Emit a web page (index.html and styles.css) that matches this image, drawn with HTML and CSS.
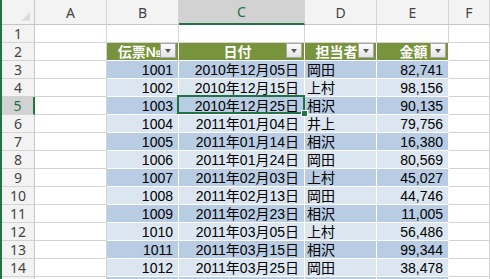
FILE: index.html
```html
<!DOCTYPE html>
<html lang="ja">
<head>
    <meta charset="UTF-8">
    <title>売上表</title>
    <link rel="stylesheet" href="styles.css">
</head>
<body>
<div class="sheet">
    <div class="row head">
        <div class="corner">
            <svg width="33" height="24" viewBox="0 0 33 24"><polygon points="29,12 29,21 20,21" fill="#dadada"/></svg>
        </div>
        <div class="colhead">A</div>
        <div class="colhead">B</div>
        <div class="colhead active">C</div>
        <div class="colhead">D</div>
        <div class="colhead">E</div>
        <div class="colhead">F</div>
    </div>

    <div class="row">
        <div class="rowhead">1</div>
        <div class="cell"></div><div class="cell"></div><div class="cell"></div>
        <div class="cell"></div><div class="cell"></div><div class="cell"></div>
    </div>

    <div class="row">
        <div class="rowhead">2</div>
        <div class="cell"></div>
        <div class="cell th th-b">伝票№<span class="filter"></span></div>
        <div class="cell th th-c">日付<span class="filter"></span></div>
        <div class="cell th th-d">担当者<span class="filter"></span></div>
        <div class="cell th th-e">金額<span class="filter"></span></div>
        <div class="cell"></div>
    </div>

    <div class="row">
        <div class="rowhead">3</div><div class="cell"></div>
        <div class="cell band num">1001</div><div class="cell band num">2010年12月05日</div>
        <div class="cell band">岡田</div><div class="cell band num">82,741</div><div class="cell"></div>
    </div>
    <div class="row">
        <div class="rowhead">4</div><div class="cell"></div>
        <div class="cell light num">1002</div><div class="cell light num">2010年12月15日</div>
        <div class="cell light">上村</div><div class="cell light num">98,156</div><div class="cell"></div>
    </div>
    <div class="row">
        <div class="rowhead active">5</div><div class="cell"></div>
        <div class="cell band num">1003</div><div class="cell band num sel">2010年12月25日</div>
        <div class="cell band">相沢</div><div class="cell band num">90,135</div><div class="cell"></div>
    </div>
    <div class="row">
        <div class="rowhead">6</div><div class="cell"></div>
        <div class="cell light num">1004</div><div class="cell light num">2011年01月04日</div>
        <div class="cell light">井上</div><div class="cell light num">79,756</div><div class="cell"></div>
    </div>
    <div class="row">
        <div class="rowhead">7</div><div class="cell"></div>
        <div class="cell band num">1005</div><div class="cell band num">2011年01月14日</div>
        <div class="cell band">相沢</div><div class="cell band num">16,380</div><div class="cell"></div>
    </div>
    <div class="row">
        <div class="rowhead">8</div><div class="cell"></div>
        <div class="cell light num">1006</div><div class="cell light num">2011年01月24日</div>
        <div class="cell light">岡田</div><div class="cell light num">80,569</div><div class="cell"></div>
    </div>
    <div class="row">
        <div class="rowhead">9</div><div class="cell"></div>
        <div class="cell band num">1007</div><div class="cell band num">2011年02月03日</div>
        <div class="cell band">上村</div><div class="cell band num">45,027</div><div class="cell"></div>
    </div>
    <div class="row">
        <div class="rowhead">10</div><div class="cell"></div>
        <div class="cell light num">1008</div><div class="cell light num">2011年02月13日</div>
        <div class="cell light">岡田</div><div class="cell light num">44,746</div><div class="cell"></div>
    </div>
    <div class="row">
        <div class="rowhead">11</div><div class="cell"></div>
        <div class="cell band num">1009</div><div class="cell band num">2011年02月23日</div>
        <div class="cell band">相沢</div><div class="cell band num">11,005</div><div class="cell"></div>
    </div>
    <div class="row">
        <div class="rowhead">12</div><div class="cell"></div>
        <div class="cell light num">1010</div><div class="cell light num">2011年03月05日</div>
        <div class="cell light">上村</div><div class="cell light num">56,486</div><div class="cell"></div>
    </div>
    <div class="row">
        <div class="rowhead">13</div><div class="cell"></div>
        <div class="cell band num">1011</div><div class="cell band num">2011年03月15日</div>
        <div class="cell band">相沢</div><div class="cell band num">99,344</div><div class="cell"></div>
    </div>
    <div class="row">
        <div class="rowhead">14</div><div class="cell"></div>
        <div class="cell light num">1012</div><div class="cell light num">2011年03月25日</div>
        <div class="cell light">岡田</div><div class="cell light num">38,478</div><div class="cell"></div>
    </div>
    <div class="row">
        <div class="rowhead"></div><div class="cell"></div>
        <div class="cell band"></div><div class="cell band"></div>
        <div class="cell band"></div><div class="cell band"></div><div class="cell"></div>
    </div>
</div>
</body>
</html>
```

FILE: styles.css
```css
:root {
    --excel-green: #217346;
    --table-head: #77933c;
    --band-dark: #b8cce4;
    --band-light: #dce6f1;
    --grid: #d4d4d4;
    --head-bg: #f3f3f3;
}

body {
    margin: 0;
    background: #fff;
    overflow: hidden;
    font-family: "Liberation Sans", "Noto Sans CJK JP", sans-serif;
}

.sheet {
    border-left: 2px solid var(--excel-green);
    height: 279px;
    overflow: hidden;
}

.row {
    display: grid;
    grid-template-columns: 33px 72px 72px 126px 72px 72px 1fr;
    height: 18px;
}

.row.head {
    height: 25px;
}

.row > div {
    box-sizing: border-box;
    border-right: 1px solid var(--grid);
    border-bottom: 1px solid var(--grid);
    display: flex;
    align-items: center;
    white-space: nowrap;
    line-height: 16px;
}

/* headers */
.corner {
    background: var(--head-bg);
    border-right-color: #c6c6c6 !important;
    border-bottom-color: #c6c6c6 !important;
}

.corner svg {
    display: block;
}

.colhead,
.rowhead {
    background: var(--head-bg);
    color: #444;
    font-family: "Noto Sans", sans-serif;
    font-size: 14px;
    justify-content: center;
}

.colhead {
    border-bottom-color: #c6c6c6 !important;
    padding-top: 1px;
}

.rowhead {
    border-right-color: #c6c6c6 !important;
}

.colhead.active {
    background: #d2d2d2;
    color: var(--excel-green);
    border-bottom: 2px solid var(--excel-green) !important;
}

.rowhead.active {
    background: #d2d2d2;
    color: var(--excel-green);
    border-right: 2px solid var(--excel-green) !important;
}

/* cells */
.cell {
    font-size: 14px;
    color: #000;
    padding: 0 2px;
}

.num {
    justify-content: flex-end;
    padding-right: 5px;
}

.band,
.light,
.th {
    border-right-color: #fff !important;
    border-bottom-color: #fff !important;
}

.band {
    background: var(--band-dark);
}

.light {
    background: var(--band-light);
}

.th {
    position: relative;
    background: var(--table-head);
    color: #fff;
    font-weight: bold;
    justify-content: center;
}

.th-b { padding-right: 8px; }
.th-c { padding-right: 10px; }
.th-d { padding-right: 10px; }
.th-e { padding-right: 0; }

.filter {
    position: absolute;
    top: 0;
    right: 2px;
    width: 16px;
    height: 15px;
    box-sizing: border-box;
    border: 1px solid #a6a6a6;
    background: linear-gradient(#fdfdfd, #e4e4e4);
}

.filter::after {
    content: "";
    position: absolute;
    left: 4px;
    top: 5px;
    border-left: 3.5px solid transparent;
    border-right: 3.5px solid transparent;
    border-top: 4px solid #595959;
}

/* selected cell */
.sel {
    position: relative;
}

.sel::before {
    content: "";
    position: absolute;
    top: -2px;
    left: -2px;
    right: -1px;
    bottom: 0;
    border: 2px solid var(--excel-green);
}

.sel::after {
    content: "";
    position: absolute;
    right: -4px;
    bottom: -3px;
    width: 5px;
    height: 5px;
    background: var(--excel-green);
    border: 1px solid #fff;
}
```
